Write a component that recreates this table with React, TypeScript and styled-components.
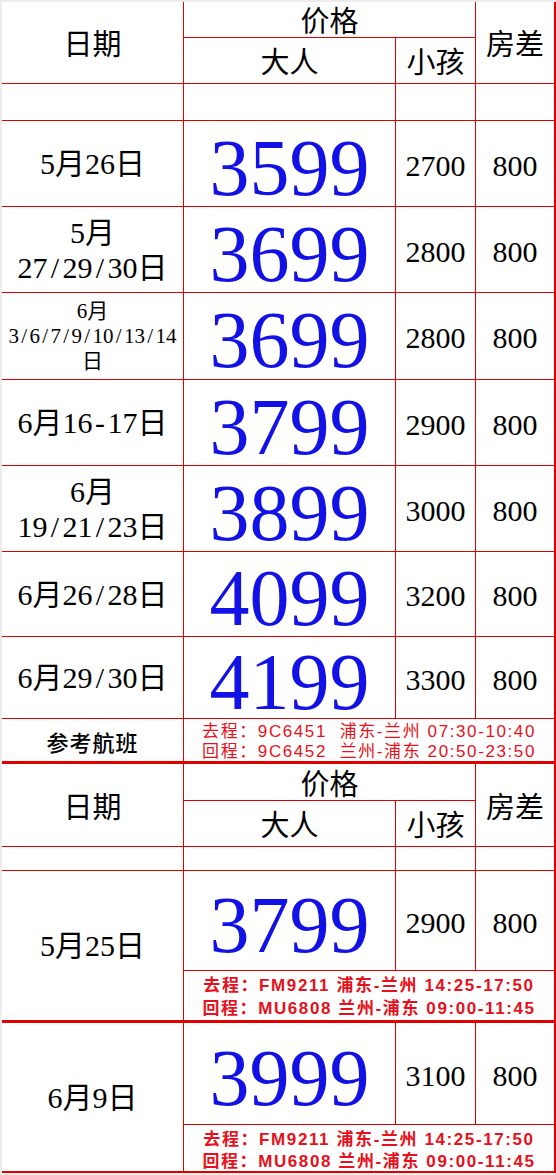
import { Fragment } from "react";
import styled, { createGlobalStyle } from "styled-components";

const RED = "#e00000";
const BLUE = "#1212e6";
const SERIF = `"Liberation Serif", "Noto Sans CJK SC", serif`;
const CJK = `"Noto Sans CJK SC", "Liberation Serif", sans-serif`;
const FLIGHT = `"Liberation Sans", "Noto Sans CJK SC", sans-serif`;

const GlobalStyle = createGlobalStyle`
  html, body {
    margin: 0;
    padding: 0;
    background: #ececec;
  }
  body {
    width: 556px;
    height: 1175px;
    overflow: hidden;
  }
`;

// one sheet, red showing through the 1px gaps as the grid lines
const Sheet = styled.div`
  margin: 2px 0 0 2px;
  width: fit-content;
  display: grid;
  grid-template-columns: 181px 211px 79px 78px;
  grid-template-rows:
    35px 45px 36px 85px 85px 86px 85px 85px 84px 81px 42px 1px
    36px 45px 23px 99px 49px 1px 101px 46px;
  gap: 1px;
  padding: 0 2px 2px 0;
  background: ${RED};
`;

interface SpanProps {
  $rows?: number;
  $cols?: number;
}

const Cell = styled.div<SpanProps>`
  background: #fff;
  display: flex;
  flex-direction: column;
  align-items: center;
  justify-content: center;
  text-align: center;
  color: #000;
  grid-row: ${({ $rows = 1 }) => `span ${$rows}`};
  grid-column: ${({ $cols = 1 }) => `span ${$cols}`};
`;

const HeadCell = styled(Cell)`
  font-family: ${CJK};
  font-size: 29px;
  font-weight: 400;
  line-height: 1;
`;

const Blank = styled(Cell)``;

interface DateProps {
  $small?: boolean;
}

const DateCell = styled(Cell)<DateProps>`
  font-family: ${SERIF};
  font-size: ${({ $small }) => ($small ? "21px" : "30px")};
  line-height: ${({ $small }) => ($small ? "25px" : "35px")};
  white-space: nowrap;
`;

// slashes and dashes are half an em wide in the sheet's font
const Sep = styled.span`
  display: inline-block;
  width: 0.5em;
  text-align: center;
`;

const BigPrice = styled(Cell)`
  font-family: ${SERIF};
  font-size: 80px;
  line-height: 1;
  color: ${BLUE};
  padding-top: 8px;
`;

const Price = styled(Cell)`
  font-family: ${SERIF};
  font-size: 30px;
  line-height: 1;
  padding-top: 4px;
`;

const NoteLabel = styled(Cell)`
  font-family: ${CJK};
  font-size: 22px;
  font-weight: 500;
  letter-spacing: 1px;
  padding-top: 2px;
`;

interface FlightProps {
  $lead?: number;
  $bold?: boolean;
}

const FlightCell = styled(Cell)<FlightProps>`
  font-family: ${FLIGHT};
  font-size: 17px;
  letter-spacing: 1.6px;
  font-weight: ${({ $bold }) => ($bold ? 700 : 400)};
  color: #e8101a;
  white-space: pre;
  padding-top: 3px;

  & > span {
    display: block;
    height: ${({ $lead = 20 }) => `${$lead}px`};
    line-height: ${({ $lead = 20 }) => `${$lead}px`};
    overflow: hidden;
  }
`;

const Rule = styled.div`
  grid-column: 1 / -1;
  background: ${RED};
`;

interface Row {
  date: string[];
  small?: boolean;
  adult: number;
  child: number;
  room: number;
}

const mayRows: Row[] = [
  { date: ["5月26日"], adult: 3599, child: 2700, room: 800 },
  { date: ["5月", "27/29/30日"], adult: 3699, child: 2800, room: 800 },
  { date: ["6月", "3/6/7/9/10/13/14", "日"], small: true, adult: 3699, child: 2800, room: 800 },
  { date: ["6月16-17日"], adult: 3799, child: 2900, room: 800 },
  { date: ["6月", "19/21/23日"], adult: 3899, child: 3000, room: 800 },
  { date: ["6月26/28日"], adult: 4099, child: 3200, room: 800 },
  { date: ["6月29/30日"], adult: 4199, child: 3300, room: 800 },
];

const fmFlights = ["去程：FM9211 浦东-兰州 14:25-17:50", "回程：MU6808 兰州-浦东 09:00-11:45"];

const juneRows = [
  { date: "5月25日", adult: 3799, child: 2900, room: 800, lead: 23 },
  { date: "6月9日", adult: 3999, child: 3100, room: 800, lead: 24 },
];

function DateLine({ text }: { text: string }) {
  const parts = text.split(/([/-])/);
  return (
    <span>
      {parts.map((p, i) => (p === "/" || p === "-" ? <Sep key={i}>{p}</Sep> : p))}
    </span>
  );
}

function Header() {
  return (
    <>
      <HeadCell $rows={2}>日期</HeadCell>
      <HeadCell $cols={2}>价格</HeadCell>
      <HeadCell $rows={2}>房差</HeadCell>
      <HeadCell>大人</HeadCell>
      <HeadCell>小孩</HeadCell>
      <Blank />
      <Blank />
      <Blank />
      <Blank />
    </>
  );
}

function PriceRow({ row }: { row: Row }) {
  return (
    <>
      <DateCell $small={row.small}>
        {row.date.map((line) => (
          <DateLine key={line} text={line} />
        ))}
      </DateCell>
      <BigPrice>{row.adult}</BigPrice>
      <Price>{row.child}</Price>
      <Price>{row.room}</Price>
    </>
  );
}

export default function App() {
  return (
    <>
      <GlobalStyle />
      <Sheet>
        <Header />
        {mayRows.map((r, i) => (
          <PriceRow key={i} row={r} />
        ))}
        <NoteLabel>参考航班</NoteLabel>
        <FlightCell $cols={3} $lead={20}>
          <span>{"去程：9C6451  浦东-兰州 07:30-10:40"}</span>
          <span>{"回程：9C6452  兰州-浦东 20:50-23:50"}</span>
        </FlightCell>
        <Rule />

        <Header />
        {juneRows.map((r, i) => (
          <Fragment key={r.date}>
            <DateCell $rows={2}>
              <DateLine text={r.date} />
            </DateCell>
            <BigPrice>{r.adult}</BigPrice>
            <Price>{r.child}</Price>
            <Price>{r.room}</Price>
            <FlightCell $cols={3} $lead={r.lead} $bold>
              {fmFlights.map((f) => (
                <span key={f}>{f}</span>
              ))}
            </FlightCell>
            {i === 0 && <Rule />}
          </Fragment>
        ))}
      </Sheet>
    </>
  );
}
